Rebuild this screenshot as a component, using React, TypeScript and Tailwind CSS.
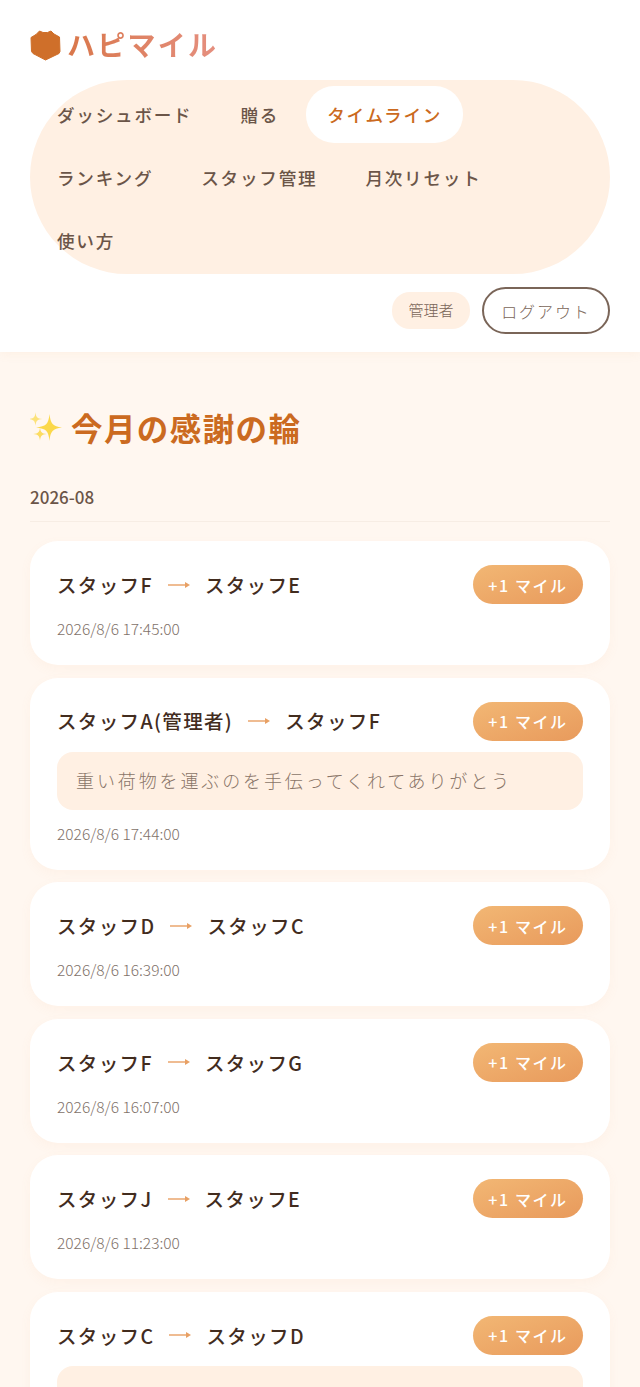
const navItems = [
  { label: "ダッシュボード" },
  { label: "贈る" },
  { label: "タイムライン", active: true },
  { label: "ランキング" },
  { label: "スタッフ管理" },
  { label: "月次リセット" },
  { label: "使い方" },
];

const entries = [
  { id: 1, from: "スタッフF", to: "スタッフE", time: "2026/8/6 17:45:00" },
  { id: 2, from: "スタッフA(管理者)", to: "スタッフF", note: "重い荷物を運ぶのを手伝ってくれてありがとう", time: "2026/8/6 17:44:00" },
  { id: 3, from: "スタッフD", to: "スタッフC", time: "2026/8/6 16:39:00" },
  { id: 4, from: "スタッフF", to: "スタッフG", time: "2026/8/6 16:07:00" },
  { id: 5, from: "スタッフJ", to: "スタッフE", time: "2026/8/6 11:23:00" },
  // the last card runs off the bottom of the window, its note text isn't visible
  { id: 6, from: "スタッフC", to: "スタッフD", note: " ", time: "" },
];

function Logo() {
  return (
    <svg width="31" height="31" viewBox="0 0 31 31" className="shrink-0">
      <path
        d="M1 7.5 L6 4.5 L9.5 1 L13 2.5 L17.5 2.5 L21 1 L24 4 L29.5 7 L30 21.5 L29 23.5 L15.5 30 L3 23.5 L1.5 21.5 Z"
        fill="#cf6f2a"
        stroke="#cf6f2a"
        strokeLinejoin="round"
      />
    </svg>
  );
}

function Sparkles() {
  const star = "M0 -10 C0.8 -2.5 2.5 -0.8 10 0 C2.5 0.8 0.8 2.5 0 10 C-0.8 2.5 -2.5 0.8 -10 0 C-2.5 -0.8 -0.8 -2.5 0 -10 Z";
  return (
    <svg width="32" height="32" viewBox="0 0 32 32" className="shrink-0">
      <path d={star} fill="#fbd84a" transform="translate(19.5 15.5) scale(1.35)" />
      <path d={star} fill="#fce27a" transform="translate(5.5 7) scale(0.68)" />
      <path d={star} fill="#fcdc62" transform="translate(10 22) scale(0.68)" />
    </svg>
  );
}

function Arrow() {
  return (
    <svg width="22" height="10" viewBox="0 0 22 10" className="shrink-0">
      <path d="M0 5 H20" stroke="#e8a064" strokeWidth="1.4" />
      <path d="M17 2 L22 5 L17 8 Z" fill="#e8a064" />
    </svg>
  );
}

function Card({ from, to, note, time }: { from: string; to: string; note?: string; time: string }) {
  return (
    <div className="rounded-[28px] bg-white px-[27px] pt-6 pb-[26px] shadow-[0_4px_12px_rgba(230,160,100,0.06)]">
      <div className="flex h-[39px] items-center justify-between">
        <div className="flex items-center gap-[15px] text-[19.5px] font-medium tracking-[0.07em] text-[#422c1e]">
          <span>{from}</span>
          <Arrow />
          <span>{to}</span>
        </div>
        <div className="flex h-[39px] w-[110px] items-center justify-center rounded-full bg-gradient-to-br from-[#f2b774] to-[#e89a5c] text-[16px] font-medium tracking-[0.1em] text-white">
          +1 マイル
        </div>
      </div>
      {note && (
        <div className="mt-[11px] flex h-[58px] items-center rounded-2xl bg-[#fff0e3] px-[19px] text-[18px] font-light tracking-[0.16em] text-[#8a7568]">
          {note}
        </div>
      )}
      <div className={`${note ? "mt-[12px]" : "mt-[13px]"} h-[22px] text-[15.5px] leading-[22px] font-light text-[#7f726a]`}>{time}</div>
    </div>
  );
}

export default function App() {
  return (
    <div
      className="h-screen overflow-hidden bg-[#fff7f0]"
      style={{ fontFamily: '"Noto Sans CJK JP", "Noto Sans", sans-serif' }}
    >
      <header className="h-[352px] bg-white px-[30px] pt-[28px] shadow-[0_2px_10px_rgba(230,160,100,0.08)]">
        <div className="flex h-[34px] items-center gap-[6px]">
          <Logo />
          <span className="bg-gradient-to-r from-[#d9774a] to-[#e58f7f] bg-clip-text pb-[3px] text-[28px] font-bold tracking-[0.08em] text-transparent">
            ハピマイル
          </span>
        </div>
        <nav className="mt-[18px] flex flex-wrap gap-x-[6px] gap-y-[6px] rounded-[97px] bg-[#fff0e3] p-[6px] pb-[5px]">
          {navItems.map((item) => (
            <div
              key={item.label}
              className={`flex h-[57px] items-center rounded-[28px] px-[21px] pt-[2px] text-[17.6px] font-medium tracking-[0.1em] ${
                item.active ? "bg-white text-[#cb6a20]" : "text-[#6b5548]"
              }`}
            >
              {item.label}
            </div>
          ))}
        </nav>
        <div className="mt-[13px] flex items-center justify-end gap-3">
          <div className="flex h-[37px] w-[78px] items-center justify-center rounded-[18px] bg-[#fff0e3] text-[15px] font-light text-[#7a6558]">
            管理者
          </div>
          <div className="flex h-[47px] w-[128px] items-center justify-center rounded-full border-2 border-[#7a6558] text-[16px] font-light tracking-[0.12em] text-[#7a6558]">
            ログアウト
          </div>
        </div>
      </header>
      <main className="px-[30px]">
        <div className="mt-[53px] flex h-[46px] items-center gap-[9px]">
          <Sparkles />
          <h1 className="text-[31.5px] font-bold tracking-[0.045em] text-[#cb6a20]">今月の感謝の輪</h1>
        </div>
        <div className="mt-[33px] border-b border-[#f7ede4] pb-[11px] text-[17px] leading-[26px] font-medium text-[#6b5548]">2026-08</div>
        <div className="mt-[19px] flex flex-col gap-[12.6px]">
          {entries.map((entry) => (
            <Card key={entry.id} from={entry.from} to={entry.to} note={entry.note} time={entry.time} />
          ))}
        </div>
      </main>
    </div>
  );
}
